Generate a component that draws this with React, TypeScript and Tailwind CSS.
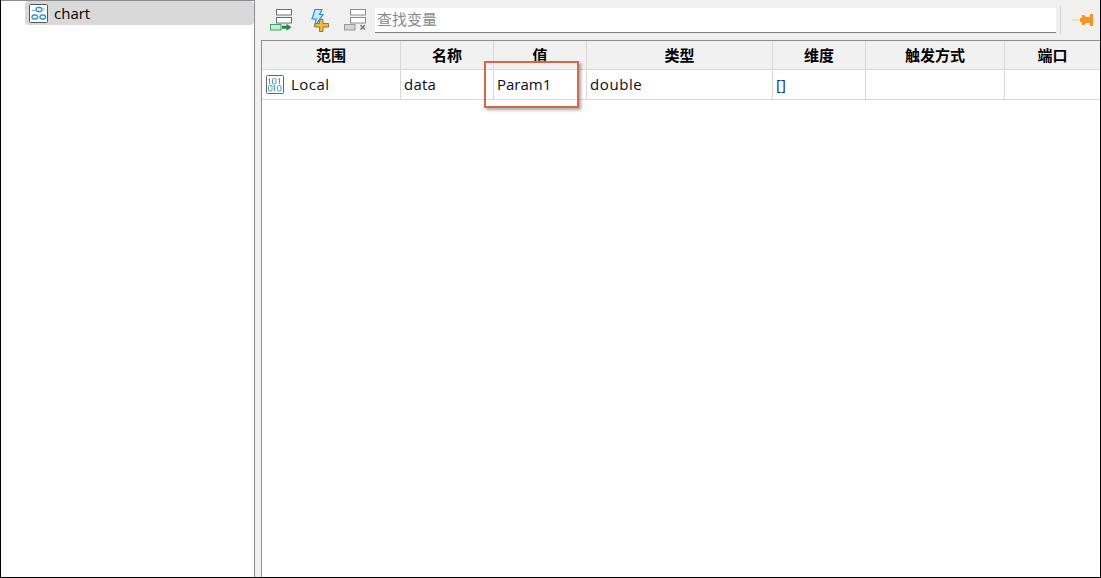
const font = { fontFamily: '"Open Sans", "Noto Sans CJK SC", sans-serif' };

const columns = [
  { label: "范围", width: "w-[139px]" },
  { label: "名称", width: "w-[93px]" },
  { label: "值", width: "w-[93px]" },
  { label: "类型", width: "w-[186px]" },
  { label: "维度", width: "w-[93px]" },
  { label: "触发方式", width: "w-[139px]" },
  { label: "端口", width: "flex-1" },
];

function ChartIcon() {
  return (
    <svg width="19" height="19" viewBox="0 0 19 19" className="shrink-0">
      <rect x="0.5" y="0.5" width="18" height="18" rx="1" fill="#fff" stroke="#555" />
      <rect x="7" y="3.500" width="6" height="4" rx="2" fill="none" stroke="#2f8fd6" strokeWidth="1.300" />
      <rect x="3" y="11" width="5.500" height="4" rx="2" fill="none" stroke="#2f8fd6" strokeWidth="1.300" />
      <rect x="11" y="11" width="5.500" height="4" rx="2" fill="none" stroke="#2f8fd6" strokeWidth="1.300" />
      <path d="M8.500 13h2.500M3 6.500h3M13.500 5h2.500" stroke="#6db4e6" />
    </svg>
  );
}

function BinaryIcon() {
  return (
    <svg width="18" height="19" viewBox="0 0 18 19" className="shrink-0">
      <rect x="0.5" y="0.5" width="17" height="18" rx="1" fill="#fff" stroke="#666" />
      <path d="M3.500 3.500v5.500M2.500 4.500l1-1" fill="none" stroke="#3c9ad9" />
      <rect x="6.500" y="3.500" width="3.500" height="5.500" rx="1.200" fill="none" stroke="#3c9ad9" />
      <path d="M13.500 3.500v5.500M12.500 4.500l1-1" fill="none" stroke="#3c9ad9" />
      <rect x="2.500" y="10.500" width="3.500" height="5.500" rx="1.200" fill="none" stroke="#3c9ad9" />
      <path d="M8.500 10.500v5.500M7.500 11.500l1-1" fill="none" stroke="#3c9ad9" />
      <rect x="11.500" y="10.500" width="3.500" height="5.500" rx="1.200" fill="none" stroke="#3c9ad9" />
    </svg>
  );
}

function AddRowIcon() {
  return (
    <svg width="24" height="24" viewBox="0 0 24 24" className="shrink-0">
      <rect x="6.500" y="1.500" width="15" height="5.500" fill="#fff" stroke="#6f6f6f" />
      <rect x="6.500" y="9.500" width="15" height="5.500" fill="#fff" stroke="#6f6f6f" />
      <rect x="0.500" y="16.500" width="10.500" height="5.500" fill="#c5ebd1" stroke="#3fa561" />
      <path d="M12 17.700h4.500v-2l5 3.500-5 3.500v-2h-4.500z" fill="#1f8a4c" />
    </svg>
  );
}

function BoltPlusIcon() {
  return (
    <svg width="21" height="24" viewBox="0 0 21 24" className="shrink-0">
      <path d="M4 1.500h7l-2.500 5h3.500L3.500 19l1.500-8H1z" fill="#c6e6fa" stroke="#2f8fd6" strokeWidth="1.200" />
      <path d="M8.500 11.500h3.500v4h5.500v3.500H12v4.500H8.500V19H4v-3.500h4.500z" fill="#eab94a" stroke="#a9761c" />
    </svg>
  );
}

function DeleteRowIcon() {
  return (
    <svg width="24" height="24" viewBox="0 0 24 24" className="shrink-0">
      <rect x="6.500" y="1.500" width="15" height="5.500" fill="#fff" stroke="#8c8c8c" />
      <rect x="6.500" y="9.500" width="15" height="5.500" fill="#fff" stroke="#8c8c8c" />
      <rect x="0.500" y="16.500" width="10.500" height="5.500" fill="#d4d4d4" stroke="#9a9a9a" />
      <path d="M16.500 17l4.500 4.500M21 17l-4.500 4.500" stroke="#777" strokeWidth="1.500" />
    </svg>
  );
}

function PinIcon() {
  return (
    <svg width="21" height="12" viewBox="0 0 21 12" className="shrink-0">
      <path d="M0 6h8" stroke="#fbd3a0" strokeWidth="1.500" />
      <path d="M8 4h2V1h2l2 2h4V0h3v12h-3V9h-4l-2 2h-2V8H8z" fill="#f7941d" />
    </svg>
  );
}

export default function App() {
  return (
    <div style={font} className="relative flex h-[578px] w-[1101px] overflow-hidden border-r border-b border-l border-black border-t-0 text-[15px] text-black">
      {/* Tree panel */}
      <aside className="h-full w-[254px] shrink-0 border-t border-r border-[#8a8d91] bg-white pl-6">
        <div className="flex h-6 items-center gap-[6px] rounded-sm bg-[#d9d9d9] pl-1">
          <ChartIcon />
          <span>chart</span>
        </div>
      </aside>

      {/* Variables panel */}
      <main className="flex min-w-0 flex-1 flex-col bg-[#f0f0f0]">
        <div className="flex h-10 shrink-0 items-center pr-[7px] pl-[15px]">
          <AddRowIcon />
          <div className="ml-[17px]"><BoltPlusIcon /></div>
          <div className="ml-[12px]"><DeleteRowIcon /></div>
          <div className="ml-[7px] flex h-[25px] flex-1 items-center border-b border-[#808080] bg-white pl-[2px] text-[15px] leading-none text-[#8a8a8a]">
            查找变量
          </div>
          <div className="mr-[11px] ml-[4px] h-[28px] w-px bg-[#d6d6d6]" />
          <PinIcon />
        </div>

        <div className="ml-[6px] flex min-h-0 flex-1 flex-col border-t border-l border-[#8a8d91] bg-white">
          <div className="flex h-[29px] shrink-0 border-b border-[#d9d9d9] bg-[#f1f1f1]">
            {columns.map((col) => (
              <div key={col.label} className={`flex items-center justify-center border-r border-[#d9d9d9] text-[15px] font-bold last:border-r-0 ${col.width}`}>
                {col.label}
              </div>
            ))}
          </div>
          <div className="flex h-[30px] shrink-0 border-b border-[#d9d9d9] text-[#0c0c20]">
            <div className="flex w-[139px] items-center gap-[7px] border-r border-[#d9d9d9] pl-1">
              <BinaryIcon />
              <span className="tracking-[0.5px]">Local</span>
            </div>
            <div className="flex w-[93px] items-center border-r border-[#d9d9d9] pl-[3px] tracking-[0.2px]">data</div>
            <div className="flex w-[93px] items-center border-r border-[#d9d9d9] pl-[3px]">Param1</div>
            <div className="flex w-[186px] items-center border-r border-[#d9d9d9] pl-[3px] tracking-[0.6px]">double</div>
            <div className="flex w-[93px] items-center border-r border-[#d9d9d9] pl-[3px] text-[#0b2f7a]">[]</div>
            <div className="w-[139px] border-r border-[#d9d9d9]" />
            <div className="flex-1" />
          </div>
        </div>
      </main>

      {/* Red annotation box */}
      <div className="absolute top-[61px] left-[483px] h-[47px] w-[95px] border-[2.5px] border-[#d9654a] shadow-[2px_2px_3px_rgba(0,0,0,0.35)]" />
    </div>
  );
}
